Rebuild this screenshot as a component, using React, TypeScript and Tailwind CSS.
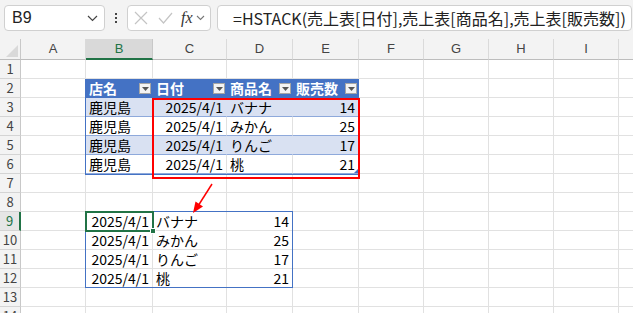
import React from "react";

const FONT = { fontFamily: '"Noto Sans CJK JP", "Noto Sans", sans-serif' };

const colW = [
  "w-[21px]",
  "w-[65px]",
  "w-[67px]",
  "w-[74px]",
  "w-[66px]",
  "w-[66px]",
  "w-[65px]",
  "w-[65px]",
  "w-[65px]",
  "w-[65px]",
  "w-[40px]",
];
const letters = ["", "A", "B", "C", "D", "E", "F", "G", "H", "I", ""];

type CellSpec = { text?: string; align?: "l" | "r"; kind?: "hdr" | "band" | "white" };

const fruits = ["バナナ", "みかん", "りんご", "桃"];
const nums = ["14", "25", "17", "21"];

function getCell(r: number, c: number): CellSpec {
  if (r === 2 && c >= 2 && c <= 5) {
    return { text: ["店名", "日付", "商品名", "販売数"][c - 2], kind: "hdr" };
  }
  if (r >= 3 && r <= 6 && c >= 2 && c <= 5) {
    const i = r - 3;
    const kind = i % 2 === 0 ? "band" : "white";
    if (c === 2) return { text: "鹿児島", align: "l", kind };
    if (c === 3) return { text: "2025/4/1", align: "r", kind };
    if (c === 4) return { text: fruits[i], align: "l", kind };
    return { text: nums[i], align: "r", kind };
  }
  if (r >= 9 && r <= 12) {
    const i = r - 9;
    if (c === 2) return { text: "2025/4/1", align: "r" };
    if (c === 3) return { text: fruits[i], align: "l" };
    if (c === 4) return { text: nums[i], align: "r" };
  }
  return {};
}

function FilterBtn() {
  return (
    <div className="absolute right-[2px] top-[4px] w-[12px] h-[11px] bg-[#f3f3f3] border border-[#a6a6a6] flex items-center justify-center">
      <svg width="7" height="4" viewBox="0 0 7 4">
        <path d="M0 0 L7 0 L3.5 4 Z" fill="#555" />
      </svg>
    </div>
  );
}

function Cell({ r, c }: { r: number; c: number }) {
  const s = getCell(r, c);
  const w = colW[c];
  let cls = `${w} h-[19px] shrink-0 relative box-border border-r border-b border-[#e1e1e1] text-[14px] leading-[18px] text-black px-[3px] overflow-visible whitespace-nowrap`;
  if (s.kind === "hdr") {
    cls = `${w} h-[19px] shrink-0 relative box-border bg-[#4472c4] border-b border-b-[#4472c4] text-[14px] leading-[18px] font-bold text-white px-[3px] whitespace-nowrap`;
  } else if (s.kind === "band") {
    cls = `${w} h-[19px] shrink-0 relative box-border bg-[#d9e1f2] border-r border-r-[#d9e1f2] border-b border-b-[#8ea9db] text-[14px] leading-[18px] text-black px-[3px] whitespace-nowrap`;
  } else if (s.kind === "white") {
    cls = `${w} h-[19px] shrink-0 relative box-border bg-white border-r border-r-[#e1e1e1] border-b border-b-[#8ea9db] text-[14px] leading-[18px] text-black px-[3px] whitespace-nowrap`;
  }
  const alignCls = s.align === "r" ? "text-right" : "text-left";
  return (
    <div className={`${cls} ${alignCls}`}>
      {s.text}
      {s.kind === "hdr" && <FilterBtn />}
    </div>
  );
}

function RowHeader({ r }: { r: number }) {
  if (r === 9) {
    return (
      <div className="w-[21px] h-[19px] shrink-0 box-border bg-[#e6e6e6] border-r-2 border-r-[#217346] border-b border-b-[#d4d4d4] text-[13px] leading-[18px] text-[#217346] text-center">
        {r}
      </div>
    );
  }
  return (
    <div className="w-[21px] h-[19px] shrink-0 box-border bg-[#f3f3f3] border-r border-r-[#c8c8c8] border-b border-b-[#d4d4d4] text-[13px] leading-[18px] text-[#444] text-center">
      {r}
    </div>
  );
}

export default function App() {
  const rows = Array.from({ length: 14 }, (_, i) => i + 1);
  return (
    <div className="w-[633px] h-[313px] overflow-hidden bg-white" style={FONT}>
      {/* formula bar */}
      <div className="h-[39px] bg-[#f3f3f3] flex items-start pt-[5px] pl-[4px]">
        <div className="w-[101px] h-[26px] bg-white border border-[#d0d0d0] rounded-[4px] flex items-center justify-between pl-[7px] pr-[6px]">
          <span className="text-[16px] text-[#222]" style={{ fontFamily: '"Liberation Sans", sans-serif' }}>B9</span>
          <svg width="11" height="7" viewBox="0 0 11 7">
            <path d="M1 1 L5.5 5.5 L10 1" stroke="#444" strokeWidth="1.2" fill="none" />
          </svg>
        </div>
        <div className="w-[22px] h-[26px] flex flex-col items-center justify-center gap-[2px]">
          <div className="w-[2px] h-[2px] bg-[#444]" />
          <div className="w-[2px] h-[2px] bg-[#444]" />
          <div className="w-[2px] h-[2px] bg-[#444]" />
        </div>
        <div className="w-[84px] h-[26px] bg-white border border-[#d0d0d0] rounded-[4px] flex items-center pl-[6px] pr-[3px]">
          <svg width="14" height="14" viewBox="0 0 14 14" className="mr-[10px]">
            <path d="M1 1 L13 13 M13 1 L1 13" stroke="#c4c4c4" strokeWidth="1.2" />
          </svg>
          <svg width="15" height="12" viewBox="0 0 15 12" className="mr-[8px]">
            <path d="M1 6 L5.5 11 L14 1" stroke="#c4c4c4" strokeWidth="1.2" fill="none" />
          </svg>
          <span className="text-[16px] italic leading-none text-[#333] mr-[3px]" style={{ fontFamily: '"Liberation Serif", serif' }}>
            fx
          </span>
          <svg width="9" height="6" viewBox="0 0 9 6">
            <path d="M1 1 L4.5 4.5 L8 1" stroke="#777" strokeWidth="1.1" fill="none" />
          </svg>
        </div>
        <div className="ml-[6px] w-[415px] h-[26px] bg-white border border-[#d0d0d0] rounded-[4px] flex items-center pl-[15px] text-[16px] text-[#222] whitespace-nowrap overflow-hidden">
          =HSTACK(売上表[日付],売上表[商品名],売上表[販売数])
        </div>
      </div>

      {/* grid */}
      <div className="relative">
        {/* column header row */}
        <div className="flex">
          <div className="w-[21px] h-[21px] shrink-0 box-border bg-[#f3f3f3] border-r border-r-[#c8c8c8] border-b border-b-[#bdbdbd] relative">
            <svg width="12" height="12" viewBox="0 0 12 12" className="absolute right-[2px] bottom-[2px]">
              <path d="M12 0 L12 12 L0 12 Z" fill="#d9d9d9" />
            </svg>
          </div>
          {letters.slice(1).map((l, i) =>
            l === "B" ? (
              <div
                key={i}
                className={`${colW[i + 1]} h-[21px] shrink-0 box-border bg-[#d9d9d9] border-r border-r-[#c8c8c8] border-b-2 border-b-[#217346] text-[13px] leading-[20px] text-center text-[#217346]`}
                style={{ fontFamily: '"Liberation Sans", sans-serif' }}
              >
                {l}
              </div>
            ) : (
              <div
                key={i}
                className={`${colW[i + 1]} h-[21px] shrink-0 box-border bg-[#f3f3f3] border-r border-r-[#dadada] border-b border-b-[#bdbdbd] text-[13px] leading-[20px] text-center text-[#444]`}
                style={{ fontFamily: '"Liberation Sans", sans-serif' }}
              >
                {l}
              </div>
            )
          )}
        </div>
        {rows.map((r) => (
          <div key={r} className="flex">
            <RowHeader r={r} />
            {Array.from({ length: 10 }, (_, i) => i + 1).map((c) => (
              <Cell key={c} r={r} c={c} />
            ))}
          </div>
        ))}

        {/* table outer border */}
        <div className="absolute left-[85px] top-[40px] w-[274px] h-[96px] border border-[#4472c4] pointer-events-none" />
        {/* resize handle */}
        <div className="absolute left-[354px] top-[130px] w-0 h-0 border-l-[4px] border-l-transparent border-b-[4px] border-b-[#4472c4]" />
        {/* red rect */}
        <div className="absolute left-[152px] top-[59px] w-[208px] h-[81px] border-2 border-[#ff0000] pointer-events-none" />
        {/* spill range border */}
        <div className="absolute left-[85px] top-[172px] w-[208px] h-[77px] border border-[#4472c4] pointer-events-none" />
        {/* selection */}
        <div className="absolute left-[85px] top-[172px] w-[69px] h-[21px] border-2 border-[#217346] pointer-events-none" />
        <div className="absolute left-[150px] top-[189px] w-[6px] h-[6px] bg-[#217346] border border-white pointer-events-none" />
        {/* arrow */}
        <svg className="absolute left-0 top-0 pointer-events-none" width="633" height="274" viewBox="0 0 633 274">
          <line x1="212" y1="145" x2="198" y2="167" stroke="#ff0000" strokeWidth="1.5" />
          <path d="M193 174 L195.5 162.5 L203 167.5 Z" fill="#ff0000" />
        </svg>
      </div>
    </div>
  );
}
